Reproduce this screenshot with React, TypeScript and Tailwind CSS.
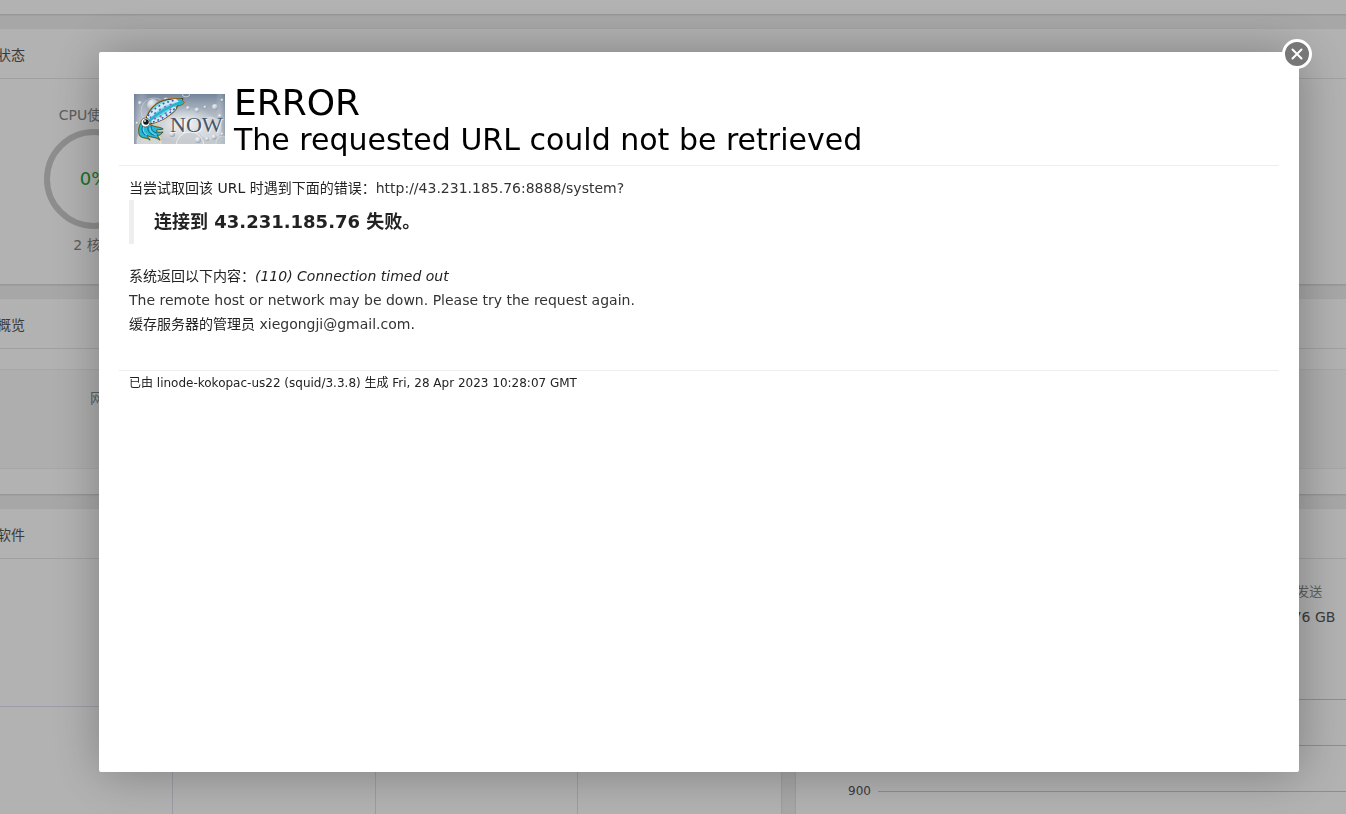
import React from "react";

const bubbles: [number, number, number][] = [
  [6, 9, 2], [19, 11, 6], [32, 6, 2.5], [54, 14, 2], [63, 16, 2.4], [71, 13, 1.5],
  [81, 13, 3], [88, 6, 1.5], [86, 22, 2], [3, 29, 1.5], [73, 45, 2], [80, 43, 2.5],
  [64, 46, 3], [88, 40, 1.8], [38, 40, 3], [60, 37, 1.5],
];

const mantle = "M12 25C15 16 21 10 27 7.500C34 4.500 41 5.500 49 4.500L48 7L50 8.500C49 11 46 10.500 43 12C43 15 40 18 34 22C29 26 23 28 16 30Z";
const arms = "M7 29C4 33 4 39 6 42C9 45 13 43 16 46C15 44 13 43 13 41C16 44 20 42 26 46L23 41C26 42 27 40 29 38C25 39 21 38 23 36C25 35 27 36 29 35C25 32 20 34 16 30Z";

function SquidBanner() {
  return (
    <svg width="91" height="50" viewBox="0 0 91 50" role="img" aria-label="Squid Now" className="block shrink-0 overflow-hidden">
      <defs>
        <linearGradient id="sea" x1="0" y1="0" x2="0" y2="1">
          <stop offset="0" stopColor="#74849a" />
          <stop offset="0.2" stopColor="#98a4b3" />
          <stop offset="0.5" stopColor="#b9c1ca" />
          <stop offset="1" stopColor="#c6cacd" />
        </linearGradient>
        <linearGradient id="edge" x1="0" y1="0" x2="1" y2="0">
          <stop offset="0" stopColor="#66788e" stopOpacity="0.6" />
          <stop offset="0.15" stopColor="#ffffff" stopOpacity="0" />
          <stop offset="0.9" stopColor="#ffffff" stopOpacity="0" />
          <stop offset="1" stopColor="#66788e" stopOpacity="0.5" />
        </linearGradient>
        <radialGradient id="glow">
          <stop offset="0" stopColor="#fff" stopOpacity="0.85" />
          <stop offset="1" stopColor="#fff" stopOpacity="0" />
        </radialGradient>
        <radialGradient id="bubble" cx="0.35" cy="0.3" r="0.75">
          <stop offset="0" stopColor="#fff" />
          <stop offset="0.55" stopColor="#c9d0d8" />
          <stop offset="1" stopColor="#8190a1" />
        </radialGradient>
        <clipPath id="mantle">
          <path d={mantle} />
        </clipPath>
      </defs>
      <rect width="91" height="50" fill="url(#sea)" />
      <rect width="91" height="50" fill="url(#edge)" />
      <ellipse cx="50" cy="30" rx="34" ry="18" fill="url(#glow)" />
      <circle cx="20" cy="17" r="13" fill="none" stroke="#dce3e9" strokeWidth="0.8" opacity="0.6" />
      <circle cx="52" cy="-1" r="4" fill="none" stroke="#d9e6eb" strokeWidth="0.7" />
      <circle cx="15" cy="48" r="12" fill="#dcdfe1" stroke="#fff" strokeWidth="0.7" opacity="0.6" />
      <circle cx="56" cy="52" r="14" fill="#c9cdd1" stroke="#fff" strokeWidth="0.8" opacity="0.75" />
      <circle cx="76" cy="34" r="11" fill="#e4e6e8" stroke="#fff" strokeWidth="0.5" opacity="0.5" />
      <circle cx="89" cy="49" r="7" fill="#b9c4cc" stroke="#fff" strokeWidth="0.5" opacity="0.7" />
      {bubbles.map(([x, y, r]) => (
        <circle key={`${x}-${y}`} cx={x} cy={y} r={r} fill="url(#bubble)" opacity="0.85" />
      ))}
      <g strokeLinejoin="round" strokeLinecap="round">
        <path d={arms} fill="#25b9d5" stroke="#e0b12e" strokeWidth="1.6" />
        <path d={arms} fill="#25b9d5" stroke="#2f3a35" strokeWidth="0.7" />
        <path d="M9 31C7 35 8 39 11 41M14 33C13 38 17 41 21 41M17 32C17 36 19 38 23 39" fill="none" stroke="#0b5f93" strokeWidth="1" />
        <path d="M10 32C8 36 10 39 13 41M16 34C16 38 19 40 22 41" fill="none" stroke="#8fe8f5" strokeWidth="0.8" />
        <path d={mantle} fill="#6fd6e6" stroke="#c9802a" strokeWidth="2" />
        <path d={mantle} fill="#6fd6e6" stroke="#3b2713" strokeWidth="0.8" />
      </g>
      <g clipPath="url(#mantle)" fill="none">
        <path d="M14 24Q24 10 44 6M18 28Q32 24 41 13" stroke="#cfeaf6" strokeWidth="4" />
        <path d="M14 22Q24 9 42 6" stroke="#3d55aa" strokeWidth="1.6" strokeDasharray="1.8 3" />
        <path d="M16 24Q26 13 42 9" stroke="#8a68bd" strokeWidth="1.8" strokeDasharray="2 4" />
        <path d="M20 25Q32 21 40 12" stroke="#a65bba" strokeWidth="1.8" strokeDasharray="2 4" />
        <path d="M19 28Q32 24 43 12" stroke="#2f52aa" strokeWidth="1.6" strokeDasharray="1.8 3" />
        <path d="M15 27Q28 15 50 7" stroke="#23b3cb" strokeWidth="2.400" />
        <path d="M43 4L50 9L44 12" stroke="#23b3cb" strokeWidth="3" />
      </g>
      <circle cx="11.500" cy="28.500" r="4.500" fill="#fff" stroke="#52514b" strokeWidth="0.8" />
      <circle cx="12" cy="28" r="2.800" fill="#15191e" />
      <circle cx="11" cy="27" r="0.900" fill="#fff" />
      <text x="37" y="39" fontFamily="Liberation Serif, serif" fontSize="22" fill="#fff" opacity="0.7">NOW</text>
      <text x="36" y="38" fontFamily="Liberation Serif, serif" fontSize="22" fill="#465768">NOW</text>
    </svg>
  );
}

function Card({ title, className = "", children }: { title: string; className?: string; children?: React.ReactNode }) {
  return (
    <section className={`bg-white shadow-[0_1px_2px_rgba(0,0,0,0.15)] ${className}`}>
      <h2 className="h-[50px] border-b border-[#e6e6e6] pl-[27px] text-sm leading-[52px] text-[#555]">{title}</h2>
      {children}
    </section>
  );
}

function Dashboard() {
  return (
    <div className="-mr-[261px] -ml-[30px] flex min-h-screen flex-col gap-[15px]">
      <div className="h-[14px] bg-white shadow-[0_1px_2px_rgba(0,0,0,0.15)]" />
      <Card title="状态" className="h-[255px]">
        <div className="ml-[64px] flex w-[120px] flex-col items-center pt-6 text-sm leading-6 text-[#888]">
          <p>CPU使用率</p>
          <div className="mt-[2px] flex size-[100px] items-center justify-center rounded-full border-6 border-[#cbcbcb] text-lg text-[#20a53a]">0%</div>
          <p className="mt-1">2 核心</p>
        </div>
      </Card>
      <Card title="概览" className="h-[195px]">
        <div className="mt-5 h-[100px] border-y border-[#efefef] bg-[#f9f9f9] pt-4 pl-[120px] text-sm leading-6 text-[#888]">网站</div>
      </Card>
      <div className="grid flex-1 grid-cols-2 gap-[15px]">
        <Card title="软件" className="flex flex-col">
          <div className="h-[148px] border-b border-[#e0e0f4]" />
          <div className="grid flex-1 grid-cols-4 divide-x divide-[#e0e0f4]">
            <div /><div /><div /><div />
          </div>
        </Card>
        <Card title="流量">
          <dl className="grid grid-cols-4 pt-5 text-center text-[#555]">
            <div className="col-start-3">
              <dt className="text-[13px] leading-[26px] text-[#888]">总发送</dt>
              <dd className="text-sm leading-6">50.76 GB</dd>
            </div>
          </dl>
          <div className="mt-[70px] ml-[81px] border-t border-[#ccc] pt-[45px]">
            <div className="border-t border-[#ccc]" />
          </div>
          <div className="mt-[33px] flex items-center gap-[7px] pl-[52px] text-xs leading-6 text-[#555]">
            <span>900</span>
            <span className="h-px flex-1 bg-[#ccc]" />
          </div>
        </Card>
      </div>
    </div>
  );
}

function ErrorPage() {
  return (
    <main className="p-5 text-sm leading-6 text-[#222]">
      <header className="flex gap-[9px] border-b border-[#eee] pt-[22px] pb-[7px] pl-[15px] text-black">
        <SquidBanner />
        <div className="-mt-[10px]">
          <h1 className="text-4xl leading-[37px]">ERROR</h1>
          <h2 className="text-3xl leading-[37px]">The requested URL could not be retrieved</h2>
        </div>
      </header>
      <div className="px-[10px] pt-[10px]">
        <p>当尝试取回该 URL 时遇到下面的错误：<a href="http://43.231.185.76:8888/system?" className="text-[#333]">http://43.231.185.76:8888/system?</a></p>
        <blockquote className="mb-5 border-l-[5px] border-[#eee] py-[10px] pl-5 text-lg leading-6 font-bold">连接到 43.231.185.76 失败。</blockquote>
        <p>系统返回以下内容：<i>(110) Connection timed out</i></p>
        <p className="text-[#333]">The remote host or network may be down. Please try the request again.</p>
        <p>缓存服务器的管理员 <a href="mailto:xiegongji@gmail.com" className="text-[#333]">xiegongji@gmail.com</a>.</p>
      </div>
      <footer className="mt-[34px] border-t border-[#eee] px-[10px] text-xs leading-6">
        已由 linode-kokopac-us22 (squid/3.3.8) 生成 Fri, 28 Apr 2023 10:28:07 GMT
      </footer>
    </main>
  );
}

export default function App() {
  return (
    <div className="h-screen overflow-hidden bg-[#f0f0f0] font-['DejaVu_Sans','Noto_Sans_CJK_SC',sans-serif]">
      <Dashboard />
      <div className="fixed inset-0 bg-black/30 pt-[52px] pr-[47px] pb-[42px] pl-[99px]">
        <div role="dialog" aria-modal="true" aria-label="ERROR" className="relative h-full rounded-[2px] bg-white shadow-[1px_1px_50px_rgba(0,0,0,0.3)]">
          <ErrorPage />
          <button type="button" aria-label="关闭" className="absolute -top-[13px] -right-[13px] flex size-[30px] items-center justify-center rounded-full border-3 border-white bg-[#777] text-white">
            <svg width="12" height="12" viewBox="0 0 12 12" fill="none" stroke="currentColor" strokeWidth="2" strokeLinecap="round" aria-hidden="true">
              <path d="M1.500 1.500L10.500 10.500M10.500 1.500L1.500 10.500" />
            </svg>
          </button>
        </div>
      </div>
    </div>
  );
}
